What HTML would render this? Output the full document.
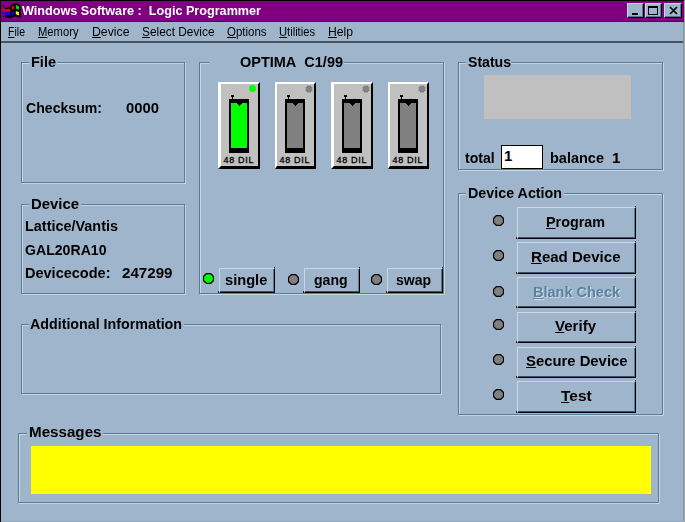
<!DOCTYPE html>
<html lang="en"><head><meta charset="utf-8"><title>Windows Software : Logic Programmer</title>
<style>
html,body{margin:0;padding:0;background:#9FB5CB;overflow:hidden}
#win{position:relative;width:685px;height:522px;background:#9FB5CB;overflow:hidden;font-family:"Liberation Sans", sans-serif}
.t{position:absolute;white-space:pre;font-family:"Liberation Sans", sans-serif;transform-origin:0 0}
.t u{text-decoration:underline;text-underline-offset:1px;text-decoration-thickness:1px}
.btn{position:absolute;box-sizing:border-box;background:#9FB5CB;border-top:1px solid #C8DAE0;border-left:1px solid #C8DAE0;border-right:1px solid #000;border-bottom:1px solid #000}
.btn i{position:absolute;left:0;top:0;right:0;bottom:0;border-right:1px solid #5C7A92;border-bottom:1px solid #3A5064}
.btn::after{content:"";position:absolute;right:-1px;top:-2px;width:1px;height:1px;background:#000}
.btn::before{content:"";position:absolute;left:-2px;bottom:-1px;width:1px;height:2px;background:#1a2630}
.cap{position:absolute;width:17px;height:15px;box-sizing:border-box;background:#9FB5CB;border-top:1px solid #C5D8DF;border-left:1px solid #C5D8DF;border-right:1px solid #000;border-bottom:1px solid #000}
.cap i{position:absolute;left:0;top:0;right:0;bottom:0;border-right:1px solid #5C7A92;border-bottom:1px solid #5C7A92}
.cap b{position:absolute;background:#000;display:block}
.sock{position:absolute;height:87px;background:#C0C0C0}
.sock i{position:absolute;left:0;top:0;right:0;bottom:0;border-top:2px solid #fff;border-left:3px solid #fff;border-right:2px solid #000;border-bottom:3px solid #000}
</style></head>
<body>
<div id="win">
<div style="position:absolute;left:0px;top:0px;width:685px;height:21px;background:#800080;"></div>
<div style="position:absolute;left:0px;top:0px;width:685px;height:1px;background:#000;"></div>
<div style="position:absolute;left:0px;top:21px;width:685px;height:1px;background:#1E2830;"></div>
<div style="position:absolute;left:0px;top:41px;width:685px;height:2px;background:#46545E;"></div>
<div style="position:absolute;left:0px;top:0px;width:1px;height:522px;background:#000;"></div>
<div style="position:absolute;left:683px;top:22px;width:1px;height:500px;background:#8097AB;"></div>
<div style="position:absolute;left:684px;top:0px;width:1px;height:522px;background:#A5A5A5;"></div>
<div style="position:absolute;left:0px;top:521px;width:684px;height:1px;background:#93A9BD;"></div>
<div style="position:absolute;left:0px;top:0px;width:1px;height:522px;background:#000;"></div>
<svg style="position:absolute;left:0;top:0" width="24" height="22" viewBox="0 0 24 22"><path d="M10.3 6.6 C11.8 4.2 13.8 3.1 16 3.3 C18 3.5 19.5 4.6 20.6 5.6 L20.6 18.4 C19.3 17.2 17.8 16.4 16 16.4 C13.8 16.4 12 17.2 10.3 18.6 Z" fill="#000"/><path d="M11.8 6.6 L14.1 5 L14.1 8.6 L11.8 10 Z" fill="#FF0000"/><path d="M15.8 4.9 L19 6.2 L19 9.8 L15.8 8.6 Z" fill="#00E000"/><path d="M11.8 12 L14.1 10.9 L14.1 14.2 L11.8 15.3 Z" fill="#0000FF"/><path d="M15.8 10.9 L19 12 L19 15.4 L15.8 14.2 Z" fill="#F0F000"/><path d="M5.2 7.6 C7 8.4 8.5 7.4 10.4 6.6 L10.4 9 L5.2 9 Z" fill="#000"/><path d="M5 15 L10.4 15 L10.4 18 C8.5 18.6 6.8 17.4 5 17.6 Z" fill="#000"/><path d="M4.8 9.2 C6.5 10 8.4 9.2 10 8.8 L10 11.8 L4.8 11.8 Z" fill="#FF0000"/><path d="M4.8 12.2 L10 12.2 L10 14.6 C8.4 15.4 6.5 15.2 4.8 15 Z" fill="#0000FF"/><rect x="2.7" y="8.7" width="1.4" height="2.4" fill="#E00030"/><rect x="2.7" y="11.9" width="1.4" height="2.4" fill="#2000E0"/><rect x="2.9" y="5.6" width="1" height="1.5" fill="#300030"/><rect x="2.9" y="15.6" width="1" height="1.5" fill="#300030"/><rect x="5" y="11.6" width="5" height="0.5" fill="#500050"/></svg>
<div class="t" style="left:22.00px;top:3.57px;font-size:12.5px;line-height:14px;font-weight:bold;color:#fff;transform:scaleX(1.0096);">Windows Software :&nbsp; Logic Programmer</div>
<div class="cap" style="left:627px;top:3px;width:17px"><i></i>
<b style="left:4px;top:9px;width:6px;height:2px"></b>
</div>
<div class="cap" style="left:645px;top:3px;width:17px"><i></i>
<b style="left:2px;top:2px;width:10px;height:9px;background:none;border:1px solid #000;border-top-width:2px;box-sizing:border-box"></b>
</div>
<div class="cap" style="left:664px;top:3px;width:18px"><i></i>
<svg style="position:absolute;left:3.5px;top:2px" width="10" height="9" viewBox="0 0 10 9"><path d="M1 1 L8 8 M8 1 L1 8" stroke="#000" stroke-width="1.7" fill="none"/></svg>
</div>
<div class="t" style="left:8.00px;top:23.90px;font-size:13px;line-height:15px;font-weight:normal;color:#000;transform:scaleX(0.8116);"><u>F</u>ile</div>
<div class="t" style="left:38.00px;top:23.90px;font-size:13px;line-height:15px;font-weight:normal;color:#000;transform:scaleX(0.8627);"><u>M</u>emory</div>
<div class="t" style="left:91.50px;top:23.90px;font-size:13px;line-height:15px;font-weight:normal;color:#000;transform:scaleX(0.9437);"><u>D</u>evice</div>
<div class="t" style="left:141.50px;top:23.90px;font-size:13px;line-height:15px;font-weight:normal;color:#000;transform:scaleX(0.9122);"><u>S</u>elect Device</div>
<div class="t" style="left:227.00px;top:23.90px;font-size:13px;line-height:15px;font-weight:normal;color:#000;transform:scaleX(0.8817);"><u>O</u>ptions</div>
<div class="t" style="left:279.00px;top:23.90px;font-size:13px;line-height:15px;font-weight:normal;color:#000;transform:scaleX(0.8593);"><u>U</u>tilities</div>
<div class="t" style="left:328.00px;top:23.90px;font-size:13px;line-height:15px;font-weight:normal;color:#000;transform:scaleX(0.9351);"><u>H</u>elp</div>
<div style="position:absolute;left:22px;top:63px;width:162px;height:119px;border:1px solid #C5D8DF;"></div>
<div style="position:absolute;left:21px;top:62px;width:162px;height:119px;border:1px solid #587C9A;"></div>
<div style="position:absolute;left:29px;top:62px;width:28px;height:2px;background:#9FB5CB;"></div>
<div class="t" style="left:31.00px;top:52.60px;font-size:15px;line-height:17px;font-weight:bold;color:#000;transform:scaleX(0.9675);">File</div>
<div class="t" style="left:26.40px;top:98.60px;font-size:15px;line-height:17px;font-weight:bold;color:#000;transform:scaleX(0.9399);">Checksum:</div>
<div class="t" style="left:125.50px;top:98.60px;font-size:15px;line-height:17px;font-weight:bold;color:#000;transform:scaleX(0.9889);">0000</div>
<div style="position:absolute;left:22px;top:205px;width:162px;height:88px;border:1px solid #C5D8DF;"></div>
<div style="position:absolute;left:21px;top:204px;width:162px;height:88px;border:1px solid #587C9A;"></div>
<div style="position:absolute;left:29px;top:204px;width:52px;height:2px;background:#9FB5CB;"></div>
<div class="t" style="left:31.00px;top:194.60px;font-size:15px;line-height:17px;font-weight:bold;color:#000;transform:scaleX(0.9924);">Device</div>
<div class="t" style="left:24.80px;top:216.80px;font-size:15px;line-height:17px;font-weight:bold;color:#000;transform:scaleX(0.9617);">Lattice/Vantis</div>
<div class="t" style="left:24.80px;top:240.60px;font-size:15px;line-height:17px;font-weight:bold;color:#000;transform:scaleX(0.9401);">GAL20RA10</div>
<div class="t" style="left:24.80px;top:264.20px;font-size:15px;line-height:17px;font-weight:bold;color:#000;transform:scaleX(0.9675);">Devicecode:</div>
<div class="t" style="left:121.50px;top:264.20px;font-size:15px;line-height:17px;font-weight:bold;color:#000;transform:scaleX(1.0089);">247299</div>
<div style="position:absolute;left:22px;top:325px;width:418px;height:68px;border:1px solid #C5D8DF;"></div>
<div style="position:absolute;left:21px;top:324px;width:418px;height:68px;border:1px solid #587C9A;"></div>
<div style="position:absolute;left:29px;top:324px;width:155px;height:2px;background:#9FB5CB;"></div>
<div class="t" style="left:30.20px;top:314.60px;font-size:15px;line-height:17px;font-weight:bold;color:#000;transform:scaleX(0.9501);">Additional Information</div>
<div style="position:absolute;left:200px;top:63px;width:243px;height:230px;border:1px solid #C5D8DF;"></div>
<div style="position:absolute;left:199px;top:62px;width:243px;height:230px;border:1px solid #587C9A;"></div>
<div style="position:absolute;left:209px;top:62px;width:135px;height:2px;background:#9FB5CB;"></div>
<div class="t" style="left:240.00px;top:52.80px;font-size:15px;line-height:17px;font-weight:bold;color:#000;transform:scaleX(0.9654);">OPTIMA&nbsp; C1/99</div>
<div style="position:absolute;left:459px;top:63px;width:203px;height:106px;border:1px solid #C5D8DF;"></div>
<div style="position:absolute;left:458px;top:62px;width:203px;height:106px;border:1px solid #587C9A;"></div>
<div style="position:absolute;left:466px;top:62px;width:45px;height:2px;background:#9FB5CB;"></div>
<div class="t" style="left:468.00px;top:52.60px;font-size:15px;line-height:17px;font-weight:bold;color:#000;transform:scaleX(0.9380);">Status</div>
<div style="position:absolute;left:484px;top:75px;width:147px;height:44px;background:#C0C0C0;"></div>
<div class="t" style="left:464.50px;top:149.10px;font-size:15px;line-height:17px;font-weight:bold;color:#000;transform:scaleX(0.9380);">total</div>
<div style="position:absolute;left:501px;top:145px;width:42px;height:24px;background:#fff;border:1px solid #000;box-sizing:border-box"></div>
<div class="t" style="left:504.00px;top:147.10px;font-size:15px;line-height:17px;font-weight:bold;color:#000;">1</div>
<div class="t" style="left:549.50px;top:149.10px;font-size:15px;line-height:17px;font-weight:bold;color:#000;transform:scaleX(0.9667);">balance</div>
<div class="t" style="left:612.00px;top:149.10px;font-size:15px;line-height:17px;font-weight:bold;color:#000;">1</div>
<div style="position:absolute;left:459px;top:194px;width:203px;height:220px;border:1px solid #C5D8DF;"></div>
<div style="position:absolute;left:458px;top:193px;width:203px;height:220px;border:1px solid #587C9A;"></div>
<div style="position:absolute;left:466px;top:193px;width:98px;height:2px;background:#9FB5CB;"></div>
<div class="t" style="left:468.00px;top:184.10px;font-size:15px;line-height:17px;font-weight:bold;color:#000;transform:scaleX(0.9536);">Device Action</div>
<div style="position:absolute;left:19px;top:434px;width:639px;height:68px;border:1px solid #C5D8DF;"></div>
<div style="position:absolute;left:18px;top:433px;width:639px;height:68px;border:1px solid #587C9A;"></div>
<div style="position:absolute;left:27px;top:433px;width:76px;height:2px;background:#9FB5CB;"></div>
<div class="t" style="left:29.00px;top:423.30px;font-size:15px;line-height:17px;font-weight:bold;color:#000;transform:scaleX(1.0110);">Messages</div>
<div style="position:absolute;left:31px;top:446px;width:620px;height:48px;background:#FFFF00;"></div>
<div class="sock" style="left:218px;top:82px;width:42px"><i style="border-left-width:3px"></i>
<svg style="position:absolute;left:0px;top:0" width="42" height="87" viewBox="0 0 42 87" shape-rendering="crispEdges"><rect x="11" y="17" width="20" height="54" fill="#000"/><rect x="13" y="21" width="16" height="45" fill="#00FF00"/><rect x="19" y="21" width="5" height="1" fill="#000"/><rect x="20" y="22" width="3" height="1" fill="#000"/><rect x="21" y="23" width="1" height="1" fill="#000"/><rect x="13" y="13" width="3" height="2" fill="#000"/><rect x="14" y="13" width="1" height="5" fill="#000"/></svg>
<div style="position:absolute;left:31.0px;top:3.0px;width:7.4px;height:7.4px;border-radius:50%;background:#00FF00"></div>
</div>
<div class="t" style="left:223.50px;top:155.28px;font-size:9px;line-height:11px;font-weight:normal;color:#000;letter-spacing:0.697px;-webkit-text-stroke:0.3px #000;">48 DIL</div>
<div class="sock" style="left:275px;top:82px;width:41px"><i style="border-left-width:2px"></i>
<svg style="position:absolute;left:-1px;top:0" width="42" height="87" viewBox="0 0 42 87" shape-rendering="crispEdges"><rect x="11" y="17" width="20" height="54" fill="#000"/><rect x="13" y="21" width="16" height="45" fill="#808080"/><rect x="19" y="21" width="5" height="1" fill="#000"/><rect x="20" y="22" width="3" height="1" fill="#000"/><rect x="21" y="23" width="1" height="1" fill="#000"/><rect x="13" y="13" width="3" height="2" fill="#000"/><rect x="14" y="13" width="1" height="5" fill="#000"/></svg>
<svg style="position:absolute;left:29.7px;top:2.7px" width="8" height="8" viewBox="0 0 8 8"><circle cx="4" cy="4" r="3.3" fill="#9C9C9C"/><circle cx="4" cy="4" r="2.7" fill="#828282"/><circle cx="6.91" cy="5.21" r="0.55" fill="#4A4A4A"/><circle cx="5.21" cy="6.91" r="0.55" fill="#4A4A4A"/><circle cx="2.79" cy="6.91" r="0.55" fill="#4A4A4A"/><circle cx="1.09" cy="5.21" r="0.55" fill="#4A4A4A"/><circle cx="1.09" cy="2.79" r="0.55" fill="#4A4A4A"/><circle cx="2.79" cy="1.09" r="0.55" fill="#4A4A4A"/><circle cx="5.21" cy="1.09" r="0.55" fill="#4A4A4A"/><circle cx="6.91" cy="2.79" r="0.55" fill="#4A4A4A"/></svg>
</div>
<div class="t" style="left:279.50px;top:155.28px;font-size:9px;line-height:11px;font-weight:normal;color:#000;letter-spacing:0.697px;-webkit-text-stroke:0.3px #000;">48 DIL</div>
<div class="sock" style="left:331px;top:82px;width:42px"><i style="border-left-width:3px"></i>
<svg style="position:absolute;left:0px;top:0" width="42" height="87" viewBox="0 0 42 87" shape-rendering="crispEdges"><rect x="11" y="17" width="20" height="54" fill="#000"/><rect x="13" y="21" width="16" height="45" fill="#808080"/><rect x="19" y="21" width="5" height="1" fill="#000"/><rect x="20" y="22" width="3" height="1" fill="#000"/><rect x="21" y="23" width="1" height="1" fill="#000"/><rect x="13" y="13" width="3" height="2" fill="#000"/><rect x="14" y="13" width="1" height="5" fill="#000"/></svg>
<svg style="position:absolute;left:30.7px;top:2.7px" width="8" height="8" viewBox="0 0 8 8"><circle cx="4" cy="4" r="3.3" fill="#9C9C9C"/><circle cx="4" cy="4" r="2.7" fill="#828282"/><circle cx="6.91" cy="5.21" r="0.55" fill="#4A4A4A"/><circle cx="5.21" cy="6.91" r="0.55" fill="#4A4A4A"/><circle cx="2.79" cy="6.91" r="0.55" fill="#4A4A4A"/><circle cx="1.09" cy="5.21" r="0.55" fill="#4A4A4A"/><circle cx="1.09" cy="2.79" r="0.55" fill="#4A4A4A"/><circle cx="2.79" cy="1.09" r="0.55" fill="#4A4A4A"/><circle cx="5.21" cy="1.09" r="0.55" fill="#4A4A4A"/><circle cx="6.91" cy="2.79" r="0.55" fill="#4A4A4A"/></svg>
</div>
<div class="t" style="left:336.50px;top:155.28px;font-size:9px;line-height:11px;font-weight:normal;color:#000;letter-spacing:0.697px;-webkit-text-stroke:0.3px #000;">48 DIL</div>
<div class="sock" style="left:388px;top:82px;width:41px"><i style="border-left-width:2px"></i>
<svg style="position:absolute;left:-1px;top:0" width="42" height="87" viewBox="0 0 42 87" shape-rendering="crispEdges"><rect x="11" y="17" width="20" height="54" fill="#000"/><rect x="13" y="21" width="16" height="45" fill="#808080"/><rect x="19" y="21" width="5" height="1" fill="#000"/><rect x="20" y="22" width="3" height="1" fill="#000"/><rect x="21" y="23" width="1" height="1" fill="#000"/><rect x="13" y="13" width="3" height="2" fill="#000"/><rect x="14" y="13" width="1" height="5" fill="#000"/></svg>
<svg style="position:absolute;left:29.7px;top:2.7px" width="8" height="8" viewBox="0 0 8 8"><circle cx="4" cy="4" r="3.3" fill="#9C9C9C"/><circle cx="4" cy="4" r="2.7" fill="#828282"/><circle cx="6.91" cy="5.21" r="0.55" fill="#4A4A4A"/><circle cx="5.21" cy="6.91" r="0.55" fill="#4A4A4A"/><circle cx="2.79" cy="6.91" r="0.55" fill="#4A4A4A"/><circle cx="1.09" cy="5.21" r="0.55" fill="#4A4A4A"/><circle cx="1.09" cy="2.79" r="0.55" fill="#4A4A4A"/><circle cx="2.79" cy="1.09" r="0.55" fill="#4A4A4A"/><circle cx="5.21" cy="1.09" r="0.55" fill="#4A4A4A"/><circle cx="6.91" cy="2.79" r="0.55" fill="#4A4A4A"/></svg>
</div>
<div class="t" style="left:392.50px;top:155.28px;font-size:9px;line-height:11px;font-weight:normal;color:#000;letter-spacing:0.697px;-webkit-text-stroke:0.3px #000;">48 DIL</div>
<div class="btn" style="left:219px;top:268px;width:56px;height:25px"><i></i></div>
<svg style="position:absolute;left:203.2px;top:273.3px" width="11" height="11" viewBox="0 0 11 11"><polygon points="3.5,0.5 7.5,0.5 10.5,3.5 10.5,7.5 7.5,10.5 3.5,10.5 0.5,7.5 0.5,3.5" fill="#00FF00" stroke="#000" stroke-width="1.3"/></svg>
<div class="t" style="left:225.20px;top:270.80px;font-size:15px;line-height:17px;font-weight:bold;color:#000;transform:scaleX(0.9759);">single</div>
<div class="btn" style="left:304px;top:268px;width:56px;height:25px"><i></i></div>
<svg style="position:absolute;left:287.7px;top:273.8px" width="11" height="11" viewBox="0 0 11 11"><polygon points="3.5,0.5 7.5,0.5 10.5,3.5 10.5,7.5 7.5,10.5 3.5,10.5 0.5,7.5 0.5,3.5" fill="#808080" stroke="#000" stroke-width="1.3"/></svg>
<div class="t" style="left:314.20px;top:270.80px;font-size:15px;line-height:17px;font-weight:bold;color:#000;transform:scaleX(0.9378);">gang</div>
<div class="btn" style="left:387px;top:268px;width:56px;height:25px"><i></i></div>
<svg style="position:absolute;left:370.5px;top:273.8px" width="11" height="11" viewBox="0 0 11 11"><polygon points="3.5,0.5 7.5,0.5 10.5,3.5 10.5,7.5 7.5,10.5 3.5,10.5 0.5,7.5 0.5,3.5" fill="#808080" stroke="#000" stroke-width="1.3"/></svg>
<div class="t" style="left:396.20px;top:270.80px;font-size:15px;line-height:17px;font-weight:bold;color:#000;transform:scaleX(0.9383);">swap</div>
<div class="btn" style="left:517px;top:207px;width:119px;height:32px"><i></i></div>
<svg style="position:absolute;left:492.7px;top:214.9px" width="11" height="11" viewBox="0 0 11 11"><polygon points="3.5,0.5 7.5,0.5 10.5,3.5 10.5,7.5 7.5,10.5 3.5,10.5 0.5,7.5 0.5,3.5" fill="#808080" stroke="#000" stroke-width="1.3"/></svg>
<div class="t" style="left:546.00px;top:213.40px;font-size:15px;line-height:17px;font-weight:bold;color:#000;transform:scaleX(0.9565);"><u>P</u>rogram</div>
<div class="btn" style="left:517px;top:242px;width:119px;height:32px"><i></i></div>
<svg style="position:absolute;left:492.7px;top:249.7px" width="11" height="11" viewBox="0 0 11 11"><polygon points="3.5,0.5 7.5,0.5 10.5,3.5 10.5,7.5 7.5,10.5 3.5,10.5 0.5,7.5 0.5,3.5" fill="#808080" stroke="#000" stroke-width="1.3"/></svg>
<div class="t" style="left:531.00px;top:248.40px;font-size:15px;line-height:17px;font-weight:bold;color:#000;transform:scaleX(1.0032);"><u>R</u>ead Device</div>
<div class="btn" style="left:517px;top:277px;width:119px;height:31px"><i></i></div>
<svg style="position:absolute;left:492.7px;top:286.3px" width="11" height="11" viewBox="0 0 11 11"><polygon points="3.5,0.5 7.5,0.5 10.5,3.5 10.5,7.5 7.5,10.5 3.5,10.5 0.5,7.5 0.5,3.5" fill="#808080" stroke="#000" stroke-width="1.3"/></svg>
<div class="t" style="left:533.40px;top:282.60px;font-size:15px;line-height:17px;font-weight:bold;color:#5A82A0;transform:scaleX(0.9663);text-shadow:1px 1px 0 #CFDFE6;"><u>B</u>lank Check</div>
<div class="btn" style="left:517px;top:312px;width:119px;height:31px"><i></i></div>
<svg style="position:absolute;left:492.7px;top:319.0px" width="11" height="11" viewBox="0 0 11 11"><polygon points="3.5,0.5 7.5,0.5 10.5,3.5 10.5,7.5 7.5,10.5 3.5,10.5 0.5,7.5 0.5,3.5" fill="#808080" stroke="#000" stroke-width="1.3"/></svg>
<div class="t" style="left:555.20px;top:317.40px;font-size:15px;line-height:17px;font-weight:bold;color:#000;transform:scaleX(1.0034);"><u>V</u>erify</div>
<div class="btn" style="left:517px;top:347px;width:119px;height:31px"><i></i></div>
<svg style="position:absolute;left:492.7px;top:354.0px" width="11" height="11" viewBox="0 0 11 11"><polygon points="3.5,0.5 7.5,0.5 10.5,3.5 10.5,7.5 7.5,10.5 3.5,10.5 0.5,7.5 0.5,3.5" fill="#808080" stroke="#000" stroke-width="1.3"/></svg>
<div class="t" style="left:525.50px;top:352.20px;font-size:15px;line-height:17px;font-weight:bold;color:#000;transform:scaleX(0.9896);"><u>S</u>ecure Device</div>
<div class="btn" style="left:517px;top:381px;width:119px;height:32px"><i></i></div>
<svg style="position:absolute;left:492.7px;top:388.9px" width="11" height="11" viewBox="0 0 11 11"><polygon points="3.5,0.5 7.5,0.5 10.5,3.5 10.5,7.5 7.5,10.5 3.5,10.5 0.5,7.5 0.5,3.5" fill="#808080" stroke="#000" stroke-width="1.3"/></svg>
<div class="t" style="left:561.40px;top:387.40px;font-size:15px;line-height:17px;font-weight:bold;color:#000;transform:scaleX(1.0293);"><u>T</u>est</div>
</div>
</body></html>
